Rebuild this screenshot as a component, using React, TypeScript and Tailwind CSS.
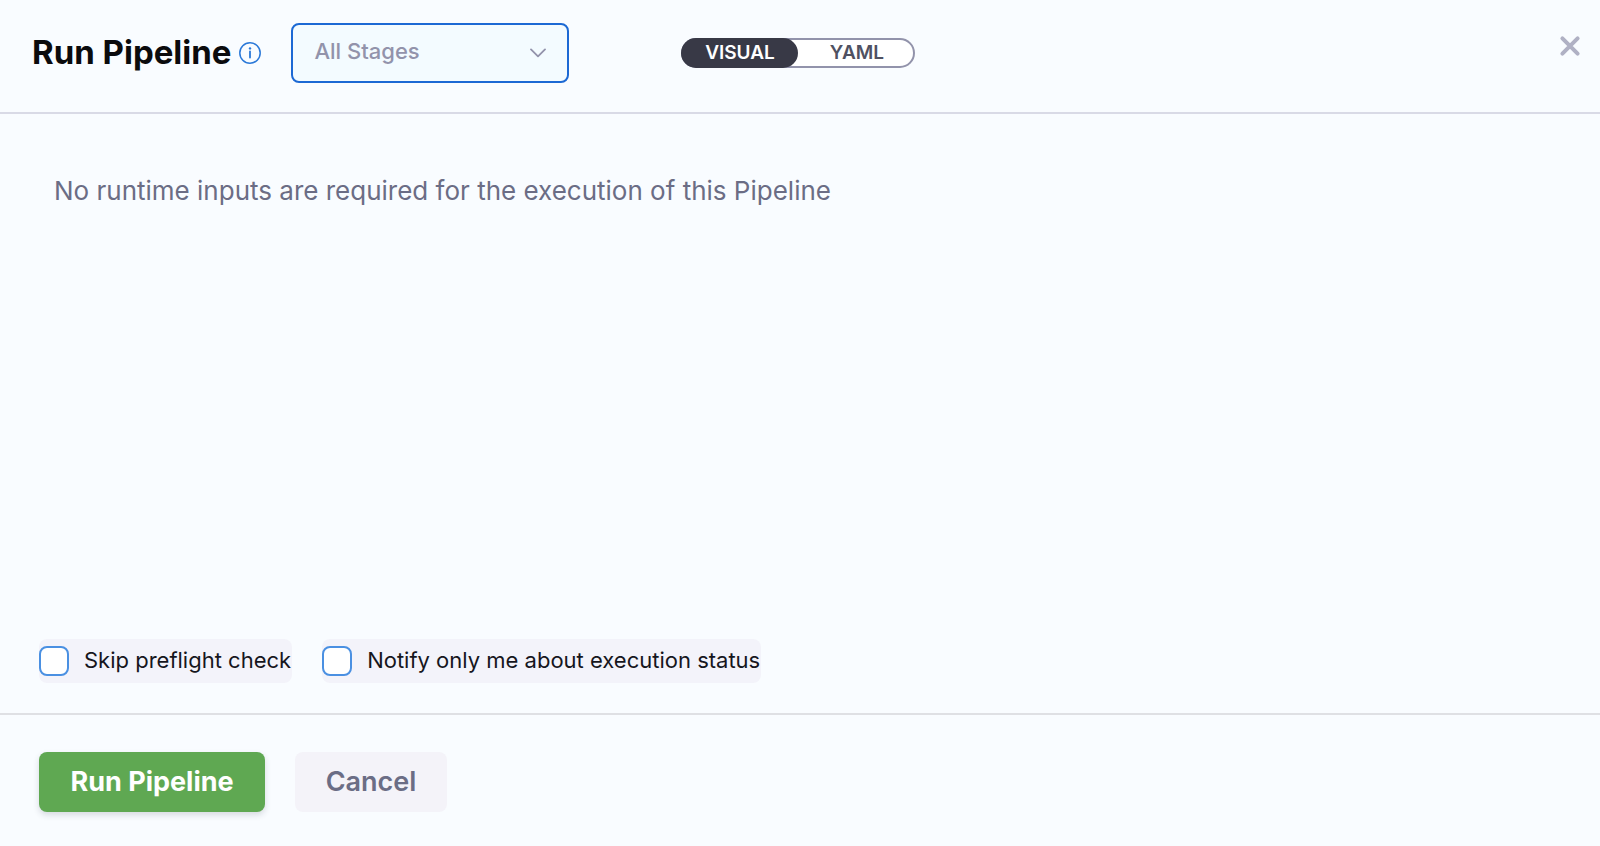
import { useState } from "react";

const views = ["VISUAL", "YAML"];

function InfoIcon() {
  return (
    <svg viewBox="0 0 22 22" className="size-[22px] shrink-0" fill="none" stroke="#2a78d8" aria-hidden="true">
      <circle cx="11" cy="11" r="10.2" strokeWidth="1.5" />
      <path d="M11 9.4V15.6" strokeWidth="1.8" strokeLinecap="round" />
      <circle cx="11" cy="6.4" r="1.2" fill="#2a78d8" stroke="none" />
    </svg>
  );
}

function StageSelect() {
  return (
    <div className="relative w-[278px]">
      <select
        aria-label="Stages"
        className="h-[60px] w-full appearance-none rounded-lg border-2 border-[#1c69d4] bg-[#f3fbff] pl-[21px] pr-12 pb-1 text-[22px] font-medium text-[#9293ab] outline-none"
      >
        <option>All Stages</option>
      </select>
      <svg
        viewBox="0 0 16 10"
        className="pointer-events-none absolute right-[23px] top-[25px] h-[10px] w-4"
        fill="none"
        stroke="#9293ab"
        strokeWidth="1.8"
        strokeLinecap="round"
        strokeLinejoin="round"
        aria-hidden="true"
      >
        <path d="M1 1.4L8 8.4L15 1.4" />
      </svg>
    </div>
  );
}

function ViewToggle() {
  const [view, setView] = useState("VISUAL");
  return (
    <div className="flex h-[30px] w-[234px] rounded-full bg-white ring-2 ring-inset ring-[#9293ab]">
      {views.map((name) => (
        <button
          key={name}
          type="button"
          aria-pressed={view === name}
          onClick={() => setView(name)}
          className={
            view === name
              ? "flex-1 rounded-full bg-[#383946] text-[19px] font-semibold leading-[30px] text-white"
              : "flex-1 rounded-full text-[19px] font-semibold leading-[30px] text-[#4f5162]"
          }
        >
          {name}
        </button>
      ))}
    </div>
  );
}

function CheckOption({ id, label }: { id: string; label: string }) {
  return (
    <div className="flex h-11 items-center gap-[15px] rounded-lg bg-[#f3f3fa] pr-px">
      <input
        id={id}
        type="checkbox"
        className="size-[30px] shrink-0 appearance-none rounded-lg border-2 border-[#4a90e2] bg-white checked:bg-[#4a90e2]"
      />
      <label htmlFor={id} className="pb-0.5 text-[22px] leading-7 text-[#16161d]">
        {label}
      </label>
    </div>
  );
}

export default function App() {
  return (
    <div className="flex min-h-screen flex-col bg-[#f9fcff] font-['Inter',sans-serif]">
      <header className="flex items-start border-b-2 border-[#d9dae6] pb-[29px] pl-8 pr-[19px] pt-[23px]">
        <div className="flex items-center">
          <h1 className="whitespace-nowrap pb-0.5 text-[33px] font-bold leading-[58px] text-[#0b0b0d]">Run Pipeline</h1>
          <button type="button" aria-label="About running a pipeline" className="ml-2 mr-[30px]">
            <InfoIcon />
          </button>
          <StageSelect />
        </div>
        <div className="ml-28 flex h-[60px] items-center">
          <ViewToggle />
        </div>
        <button type="button" aria-label="Close" className="ml-auto mt-3">
          <svg viewBox="0 0 22 22" className="size-[22px]" stroke="#b0b1c4" strokeWidth="4" strokeLinecap="round" aria-hidden="true">
            <path d="M3.4 3.4L18.6 18.6M18.6 3.4L3.4 18.6" />
          </svg>
        </button>
      </header>

      <main className="flex flex-1 flex-col justify-between px-[39px] pb-[30px] pt-[59px]">
        <p className="pl-[15px] text-[26px] leading-[36px] text-[#6b6d85]">
          No runtime inputs are required for the execution of this Pipeline
        </p>
        <div className="flex flex-wrap gap-[30px]">
          <CheckOption id="skip-preflight" label="Skip preflight check" />
          <CheckOption id="notify-me" label="Notify only me about execution status" />
        </div>
      </main>

      <footer className="flex gap-[30px] border-t-2 border-[#dfe0e4] px-[39px] pb-[34px] pt-[37px]">
        <button
          type="button"
          className="h-[60px] w-[226px] rounded-lg bg-[#5fa852] text-[27px] font-bold text-white shadow-[0_3px_6px_rgba(40,41,61,0.16)]"
        >
          Run Pipeline
        </button>
        <button type="button" className="h-[60px] w-[152px] rounded-lg bg-[#f4f3f9] text-[27px] font-semibold text-[#6b6d85]">
          Cancel
        </button>
      </footer>
    </div>
  );
}
